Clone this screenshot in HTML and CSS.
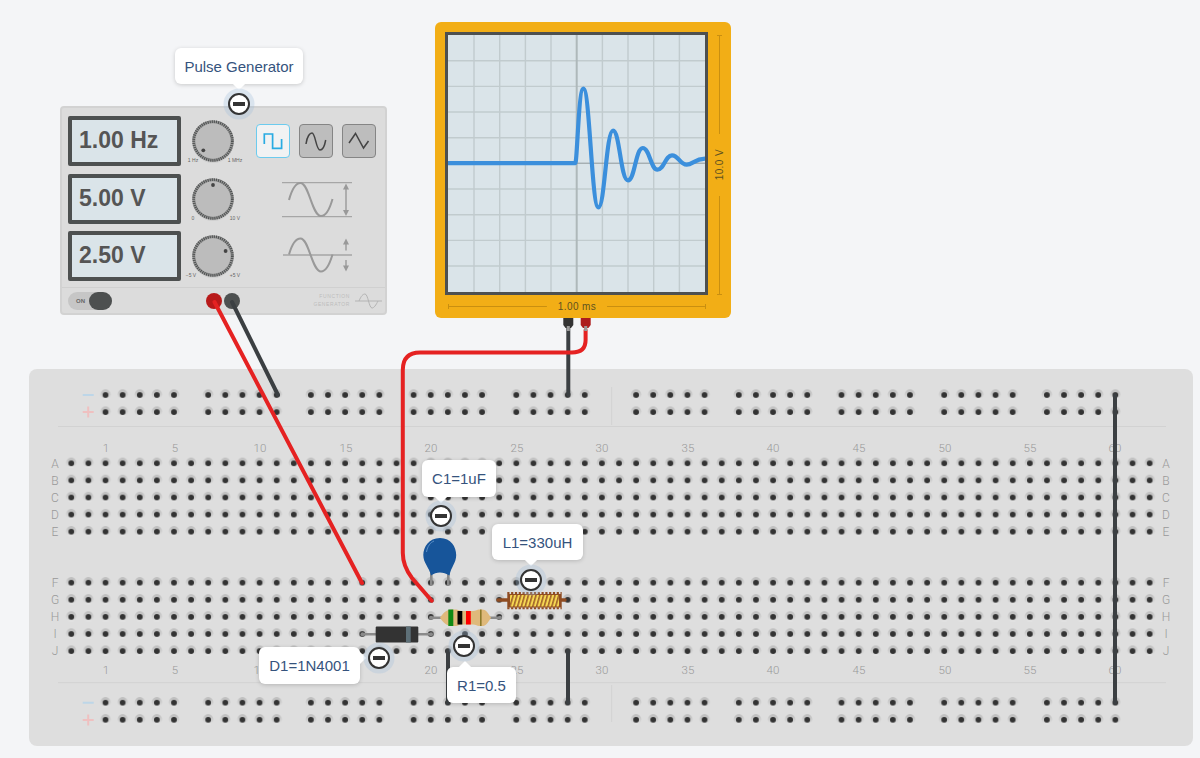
FILE: index.html
```html
<!DOCTYPE html>
<html>
<head>
  <title>Pulse Generator Circuit</title>
  <link rel="stylesheet" href="styles.css">
</head>
<body>

  <!-- shared shapes -->
  <svg class="defs" width="0" height="0">
    <defs>
      <linearGradient id="holeShade" x1="0" y1="0" x2="0" y2="1">
        <stop offset="0" stop-color="#bcbcbc"/>
        <stop offset="0.55" stop-color="#cfcfcf"/>
        <stop offset="1" stop-color="#e6e6e6"/>
      </linearGradient>
      <pattern id="hole" patternUnits="userSpaceOnUse" width="17.117" height="17.1">
        <circle cx="8.56" cy="8.1" r="5.2" fill="url(#holeShade)"/>
        <circle cx="8.56" cy="8.55" r="2.9" fill="#333"/>
      </pattern>
      <pattern id="coil" patternUnits="userSpaceOnUse" width="3.8" height="20" patternTransform="skewX(-16)">
        <rect width="3.8" height="20" fill="#8f4c22"/>
        <rect x="0.6" width="2.4" height="20" fill="#f6d752"/>
      </pattern>
      <g id="strip"><rect width="1095.5" height="85.5" fill="url(#hole)"/></g>
      <g id="rail"><rect width="85.585" height="34.2" fill="url(#hole)"/></g>
      <g id="knob">
        <circle cx="30" cy="31" r="21" fill="#cfcfcf"/>
        <circle cx="30" cy="30" r="20.8" fill="#9a9a9a"/>
        <circle cx="30" cy="30" r="19.2" fill="none" stroke="#4f5252" stroke-width="3" stroke-dasharray="1.1 1.01"/>
        <circle cx="30" cy="30" r="17.7" fill="#bcbcbc"/>
      </g>
    </defs>
  </svg>

  <div class="canvas">

    <!-- breadboard -->
    <div class="board">
      <svg class="board-art" viewBox="29 369 1164 377" width="1164" height="377">
        <path class="divider" d="M58 426.5H1166M58 682.7H1166M611.7 387V425M611.7 685V722"/>
        <path class="rail-minus" d="M82.7 395H93.7M82.7 702.7H93.7"/>
        <path class="rail-plus" d="M82.7 412H93.7M88.2 406.5V417.5M82.7 720H93.7M88.2 714.5V725.5"/>

        <use href="#rail" x="96.97" y="386.45"/><use href="#rail" x="199.64" y="386.45"/>
        <use href="#rail" x="302.34" y="386.45"/><use href="#rail" x="405.04" y="386.45"/>
        <use href="#rail" x="507.74" y="386.45"/><use href="#rail" x="627.54" y="386.45"/>
        <use href="#rail" x="730.24" y="386.45"/><use href="#rail" x="832.94" y="386.45"/>
        <use href="#rail" x="935.64" y="386.45"/><use href="#rail" x="1038.34" y="386.45"/>

        <use href="#strip" x="62.74" y="454.75"/>
        <use href="#strip" x="62.74" y="574.15"/>

        <use href="#rail" x="96.97" y="694.15"/><use href="#rail" x="199.64" y="694.15"/>
        <use href="#rail" x="302.34" y="694.15"/><use href="#rail" x="405.04" y="694.15"/>
        <use href="#rail" x="507.74" y="694.15"/><use href="#rail" x="627.54" y="694.15"/>
        <use href="#rail" x="730.24" y="694.15"/><use href="#rail" x="832.94" y="694.15"/>
        <use href="#rail" x="935.64" y="694.15"/><use href="#rail" x="1038.34" y="694.15"/>

        <g class="col-nums">
          <text x="106" y="452">1</text><text x="175" y="452">5</text><text x="260" y="452">10</text>
          <text x="346" y="452">15</text><text x="431" y="452">20</text><text x="517" y="452">25</text>
          <text x="602" y="452">30</text><text x="688" y="452">35</text><text x="773" y="452">40</text>
          <text x="859" y="452">45</text><text x="945" y="452">50</text><text x="1030" y="452">55</text>
          <text x="1115" y="452">60</text>
          <text x="106" y="674">1</text><text x="175" y="674">5</text><text x="260" y="674">10</text>
          <text x="431" y="674">20</text><text x="517" y="674">25</text>
          <text x="602" y="674">30</text><text x="688" y="674">35</text><text x="773" y="674">40</text>
          <text x="859" y="674">45</text><text x="945" y="674">50</text><text x="1030" y="674">55</text>
          <text x="1115" y="674">60</text>
        </g>
        <g class="row-names">
          <text x="55" y="468">A</text><text x="55" y="485">B</text><text x="55" y="502">C</text><text x="55" y="519">D</text><text x="55" y="536">E</text>
          <text x="55" y="587">F</text><text x="55" y="604">G</text><text x="55" y="621">H</text><text x="55" y="638">I</text><text x="55" y="655">J</text>
          <text x="1166" y="468">A</text><text x="1166" y="485">B</text><text x="1166" y="502">C</text><text x="1166" y="519">D</text><text x="1166" y="536">E</text>
          <text x="1166" y="587">F</text><text x="1166" y="604">G</text><text x="1166" y="621">H</text><text x="1166" y="638">I</text><text x="1166" y="655">J</text>
        </g>
      </svg>
    </div>

    <!-- function generator -->
    <div class="generator">
      <div class="gen-row">
        <div class="display">1.00 Hz</div>
        <svg class="knob" width="60" height="60" viewBox="0 0 60 60">
          <use href="#knob"/><circle class="knob-dot" cx="20.3" cy="39.3" r="1.9"/>
          <text class="knob-label" x="10" y="50.5">1 Hz</text><text class="knob-label" x="52" y="50.5">1 MHz</text>
        </svg>
        <div class="wave-btns">
          <div class="wave-btn wave-btn-on">
            <svg width="30" height="30" viewBox="2 2 30 30"><path class="wave-on" d="M8.3 20V10H16.6V24.4H25.6V15"/></svg>
          </div>
          <div class="wave-btn">
            <svg width="30" height="30" viewBox="2 2 30 30"><path class="wave-off" d="M7 20C8 12 11 9 13 9C16.5 9 17 26 21 26C24 26 26 20 26.7 16"/></svg>
          </div>
          <div class="wave-btn">
            <svg width="30" height="30" viewBox="2 2 30 30"><path class="wave-off" d="M7 19L13.5 9.5L21.5 24L26.5 17"/></svg>
          </div>
        </div>
      </div>
      <div class="gen-row">
        <div class="display">5.00 V</div>
        <svg class="knob" width="60" height="60" viewBox="0 0 60 60">
          <use href="#knob"/><circle class="knob-dot" cx="30" cy="16" r="1.9"/>
          <text class="knob-label" x="10" y="50.5">0</text><text class="knob-label" x="52" y="50.5">10 V</text>
        </svg>
        <svg class="wave-hint" width="72" height="44" viewBox="281 176 72 44">
          <path class="hint-line" d="M281 181.7H351M281 215.7H351"/>
          <path class="hint-curve" d="M288 199C291 188 295 182 299.5 182C308 182 311 215 320 215C325 215 329 207 331.5 198"/>
          <path class="hint-arrow" d="M345 186V212"/>
          <path class="hint-head" d="M345 182.5L348 188.5H342ZM345 215L348 209H342Z"/>
        </svg>
      </div>
      <div class="gen-row gen-row-last">
        <div class="display">2.50 V</div>
        <svg class="knob" width="60" height="60" viewBox="0 0 60 60">
          <use href="#knob"/><circle class="knob-dot" cx="42.6" cy="25" r="1.9"/>
          <text class="knob-label" x="8" y="50.5">−5 V</text><text class="knob-label" x="52" y="50.5">+5 V</text>
        </svg>
        <svg class="wave-hint" width="72" height="44" viewBox="281 236 72 44">
          <path class="hint-line" d="M282 257H351"/>
          <path class="hint-curve" d="M288 256.5C291 246 295 240.5 299.5 240.5C308 240.5 311 273.5 320 273.5C325 273.5 329 265 331.5 256.5"/>
          <path class="hint-arrow" d="M345 244V252.5M345 262V270"/>
          <path class="hint-head" d="M345 240.5L348 246.5H342ZM345 273.5L348 267.5H342Z"/>
        </svg>
      </div>
      <div class="gen-foot">
        <div class="toggle"><span class="toggle-text">ON</span><span class="toggle-thumb"></span></div>
        <div class="terminals"><span class="term term-red"></span><span class="term term-black"></span></div>
        <div class="brand">FUNCTION<br>GENERATOR</div>
        <svg class="brand-wave" width="27" height="16" viewBox="0 0 27 16">
          <path d="M0 8H27M4 8C6 3 8 1 10 1C13 1 14 15 17 15C19 15 21 12 23 8"/>
        </svg>
      </div>
    </div>

    <!-- oscilloscope -->
    <div class="scope">
      <div class="scope-top">
        <div class="scope-screen">
          <svg width="257" height="257" viewBox="448.3 35.3 257 257">
            <path class="grid-line" d="M474.3 35V293M500 35V293M525.7 35V293M551.3 35V293M602.7 35V293M628.3 35V293M654 35V293M679.7 35V293M448 61H706M448 86.7H706M448 112.3H706M448 138H706M448 189.3H706M448 215H706M448 240.7H706M448 266.3H706"/>
            <path class="grid-mid-v" d="M577 35V293"/>
            <path class="grid-mid-h" d="M448 163.5H706"/>
            <path class="trace" d="M447 163.5H575.5C577.5 163.5 578.8 89 583.7 89C590 89 592 207.7 598.7 207.7C605 207.7 606.5 131 613.3 131C620 131 621 180.7 628.3 180.7C635 180.7 636 148.3 643 148.3C650 148.3 651 170 657.7 170C664.5 170 665.5 155.7 672.3 155.7C679 155.7 680 165 687 165C693 165 695 159 706 159"/>
          </svg>
        </div>
        <div class="scope-v">
          <span class="rule-v rule-top"></span>
          <span class="scope-text scope-text-v">10.0 V</span>
          <span class="rule-v rule-bottom"></span>
        </div>
      </div>
      <div class="scope-h">
        <span class="rule-h rule-left"></span>
        <span class="scope-text">1.00 ms</span>
        <span class="rule-h rule-right"></span>
      </div>
    </div>

    <!-- parts and wires on the board -->
    <svg class="parts" width="1200" height="758" viewBox="0 0 1200 758">
      <path class="wire-black" d="M1115 395V703M568.3 328V395M448 651V703M568 651V703"/>
      <path class="wire-black" d="M232 302L278 395"/>
      <path class="wire-red" d="M214.5 302L362 583"/>
      <path class="wire-red" d="M585.6 330V340Q585.6 352.5 572 352.5H420Q402.8 352.5 402.8 370V553Q402.8 566 412 578L431.7 600.7"/>

      <path class="plug-black" d="M563.3 318H573.3V325L571 328H565.6L563.3 325Z"/>
      <path class="plug-red" d="M580.7 318H590.7V325L588.4 328H583L580.7 325Z"/>
      <path class="plug-neck" d="M568.3 326V331M585.7 326V331"/>

      <!-- capacitor -->
      <path class="lead" d="M431.3 572V585M448.3 572V585"/>
      <path class="cap-body" d="M440 538C451 538 456.2 547 456.2 555C456.2 563 451 567 449.5 575.5C443 571.5 436.5 571.5 431 575.5C429 567 423.3 563 423.3 555C423.3 547 429 538 440 538Z"/>
      <path class="cap-shine" d="M426.5 552C427.5 546 430.5 542.5 434 541"/>

      <!-- inductor -->
      <path class="ind-lead" d="M498 600H565"/>
      <path class="ind-teeth" d="M507.3 593H561.7M507.3 608.3H561.7"/>
      <rect class="ind-body" x="507.3" y="594" width="54.4" height="13.5"/>
      <rect x="510" y="595" width="49" height="11.5" fill="url(#coil)"/>

      <!-- resistor -->
      <path class="lead" d="M431 617.7H500"/>
      <circle class="lead-end" cx="431" cy="617.7" r="2"/>
      <circle class="lead-end" cx="500" cy="617.7" r="2"/>
      <path class="res-body" d="M440 617.7C443 613 447 609.5 452 609.5H456C458 609.5 459 611 462 611H473C476 611 477 609.5 479 609.5H482C486 609.5 488 613 491 617.7C488 622.5 486 626 482 626H479C477 626 476 624.5 473 624.5H462C459 624.5 458 626 456 626H452C447 626 443 622.5 440 617.7Z"/>
      <rect class="band-green" x="448.3" y="609.5" width="5" height="16.5"/>
      <rect class="band-black" x="457.5" y="611" width="4.8" height="13.5"/>
      <rect class="band-red" x="466" y="611" width="4.8" height="13.5"/>
      <rect class="band-gold" x="480" y="609.5" width="1.6" height="16.5"/>

      <!-- diode -->
      <path class="lead" d="M362.5 634.3H431"/>
      <circle class="lead-end" cx="362.5" cy="634.3" r="2"/>
      <circle class="lead-end" cx="431" cy="634.3" r="2"/>
      <rect class="diode-body" x="375.7" y="626.5" width="42.6" height="16" rx="1"/>
      <rect class="diode-band" x="406" y="626.5" width="4.7" height="16"/>
    </svg>

    <!-- labels -->
    <div class="tip tip-gen">Pulse Generator</div>
    <span class="pin pin-gen"></span>
    <div class="tip tip-cap">C1=1uF</div>
    <span class="pin pin-cap"></span>
    <div class="tip tip-ind">L1=330uH</div>
    <span class="pin pin-ind"></span>
    <div class="tip tip-dio">D1=1N4001</div>
    <span class="pin pin-dio"></span>
    <div class="tip tip-res">R1=0.5</div>
    <span class="pin pin-res"></span>

  </div>

</body>
</html>
```

FILE: styles.css
```css
body {
  margin: 0;
  background-color: #f4f5f7;
  font-family: "Liberation Sans", Arial, sans-serif;
}

.defs {
  position: absolute;
}

.canvas {
  position: relative;
  width: 1200px;
  height: 758px;
  overflow: hidden;
}

/* breadboard */
.board {
  position: absolute;
  left: 29px;
  top: 369px;
  width: 1164px;
  height: 377px;
  background-color: #dedede;
  border-radius: 8px;
}

.board-art {
  display: block;
}

.divider {
  fill: none;
  stroke: #d2d2d2;
  stroke-width: 1;
}

.rail-minus {
  fill: none;
  stroke: #bdd6e8;
  stroke-width: 2;
}

.rail-plus {
  fill: none;
  stroke: #efc0c0;
  stroke-width: 2;
}

.col-nums text,
.row-names text {
  font-family: Roboto, sans-serif;
  font-size: 11.5px;
  font-weight: 300;
  fill: #999;
  text-anchor: middle;
}

.row-names text {
  font-size: 12px;
}

/* function generator */
.generator {
  position: absolute;
  left: 60px;
  top: 106px;
  width: 327px;
  height: 209px;
  box-sizing: border-box;
  padding: 8px 6px 0 6px;
  background-color: #dcdcdc;
  border: 2px solid #d2d2d2;
  border-radius: 4px;
  display: flex;
  flex-direction: column;
  gap: 8px;
}

.gen-row {
  display: flex;
  align-items: center;
  height: 50px;
}

.gen-row-last {
  margin-top: -1px;
}

.display {
  width: 113px;
  height: 50px;
  box-sizing: border-box;
  padding-left: 7px;
  border: 4px solid #4d5050;
  border-radius: 2px;
  background-color: #dae4e9;
  color: #555;
  font-size: 23px;
  font-weight: bold;
  line-height: 40px;
}

.knob {
  margin-left: 2px;
  flex-shrink: 0;
}

.knob-dot {
  fill: #444;
}

.knob-label {
  font-size: 5px;
  fill: #666;
  text-anchor: middle;
}

.wave-btns {
  display: flex;
  gap: 9px;
  margin-left: 13px;
}

.wave-btn {
  width: 34px;
  height: 34px;
  box-sizing: border-box;
  display: flex;
  align-items: center;
  justify-content: center;
  background-color: #bdbdbd;
  border: 1.5px solid #858585;
  border-radius: 4px;
}

.wave-btn-on {
  background-color: #f1f2f3;
  border-color: #6ccbee;
}

.wave-on {
  fill: none;
  stroke: #29abe2;
  stroke-width: 1.7;
}

.wave-off {
  fill: none;
  stroke: #444;
  stroke-width: 1.5;
}

.wave-hint {
  margin-left: 39px;
}

.hint-line {
  fill: none;
  stroke: #a6a6a6;
  stroke-width: 1.3;
}

.hint-curve {
  fill: none;
  stroke: #999;
  stroke-width: 2;
}

.hint-arrow {
  fill: none;
  stroke: #999;
  stroke-width: 1.4;
}

.hint-head {
  fill: #999;
}

.gen-foot {
  position: relative;
  display: flex;
  align-items: center;
  height: 26px;
  margin: -2px -6px 0 -6px;
  padding-left: 6px;
  border-top: 1px solid #d0d0d0;
}

.toggle {
  width: 44px;
  height: 18px;
  display: flex;
  align-items: center;
  justify-content: space-between;
  background-color: #c6c6c6;
  border-radius: 9px;
}

.toggle-text {
  margin-left: 8px;
  font-size: 6px;
  font-weight: bold;
  color: #666;
}

.toggle-thumb {
  width: 23px;
  height: 18px;
  background-color: #4d5050;
  border-radius: 9px;
}

.terminals {
  display: flex;
  gap: 2px;
  margin-left: 94px;
}

.term {
  width: 16px;
  height: 16px;
  border-radius: 50%;
}

.term-red {
  background-color: #b81a1a;
}

.term-black {
  background-color: #4d5050;
}

.brand {
  margin-left: auto;
  font-size: 5px;
  line-height: 7.5px;
  letter-spacing: 0.6px;
  color: #bdbdbd;
  text-align: right;
}

.brand-wave {
  margin: 0 3px 0 5px;
}

.brand-wave path {
  fill: none;
  stroke: #b4b4b4;
  stroke-width: 1;
}

/* oscilloscope */
.scope {
  position: absolute;
  left: 435px;
  top: 22px;
  width: 296px;
  height: 296px;
  box-sizing: border-box;
  padding: 10px 0 0 10px;
  background-color: #f2ae16;
  border-radius: 6px;
}

.scope-top {
  display: flex;
}

.scope-screen {
  width: 263px;
  height: 263px;
  box-sizing: border-box;
  border: 3px solid #4d5050;
  background-color: #dae4e9;
}

.scope-screen svg {
  display: block;
}

.grid-line {
  fill: none;
  stroke: #c1cbce;
  stroke-width: 1.4;
}

.grid-mid-v {
  fill: none;
  stroke: #aeb8ba;
  stroke-width: 2;
}

.grid-mid-h {
  fill: none;
  stroke: #8f979a;
  stroke-width: 1;
}

.trace {
  fill: none;
  stroke: #3b8fdc;
  stroke-width: 4.2;
  stroke-linejoin: round;
}

.scope-v {
  width: 23px;
  height: 263px;
  display: flex;
  flex-direction: column;
  align-items: center;
  padding-top: 3px;
  box-sizing: border-box;
}

.scope-h {
  display: flex;
  align-items: center;
  width: 258px;
  margin: 3px 0 0 3px;
  height: 17px;
}

.scope-text {
  padding: 0 11px;
  font-size: 10px;
  letter-spacing: 0.4px;
  color: #5f5220;
  white-space: nowrap;
}

.scope-text-v {
  padding: 15px 0;
  writing-mode: vertical-rl;
  transform: rotate(180deg);
}

.rule-h {
  flex: 1;
  height: 5px;
  background: linear-gradient(#c98f10, #c98f10) center / 100% 1px no-repeat;
}

.rule-left {
  border-left: 1px solid #c98f10;
}

.rule-right {
  border-right: 1px solid #c98f10;
}

.rule-v {
  flex: 1;
  width: 5px;
  background: linear-gradient(#c98f10, #c98f10) center / 1px 100% no-repeat;
}

.rule-top {
  border-top: 1px solid #c98f10;
}

.rule-bottom {
  border-bottom: 1px solid #c98f10;
}

/* wires and parts */
.parts {
  position: absolute;
  left: 0;
  top: 0;
}

.wire-black {
  fill: none;
  stroke: #3b3f42;
  stroke-width: 4;
  stroke-linecap: round;
}

.wire-red {
  fill: none;
  stroke: #e52222;
  stroke-width: 4;
  stroke-linecap: round;
}

.plug-black {
  fill: #333;
}

.plug-red {
  fill: #ad1c1c;
}

.plug-neck {
  fill: none;
  stroke: #9a9a9a;
  stroke-width: 3;
}

.lead {
  fill: none;
  stroke: #8a8a8a;
  stroke-width: 2.6;
}

.lead-end {
  fill: #8a8a8a;
}

.cap-body {
  fill: #17559a;
}

.cap-shine {
  fill: none;
  stroke: #5a8fc8;
  stroke-width: 1;
}

.ind-lead {
  fill: none;
  stroke: #8f4c22;
  stroke-width: 3.4;
  stroke-linecap: round;
}

.ind-teeth {
  fill: none;
  stroke: #8f4c22;
  stroke-width: 2;
  stroke-dasharray: 2.2 1.6;
}

.ind-body {
  fill: #8f4c22;
}

.res-body {
  fill: #dfb97b;
}

.band-green {
  fill: #0f8a14;
}

.band-black {
  fill: #000;
}

.band-red {
  fill: #f00;
}

.band-gold {
  fill: #8c7a2a;
}

.diode-body {
  fill: #333;
}

.diode-band {
  fill: #5e7078;
}

/* labels */
.tip {
  position: absolute;
  display: flex;
  align-items: center;
  justify-content: center;
  box-sizing: border-box;
  background-color: #fff;
  border-radius: 6px;
  box-shadow: 0 1px 4px rgba(0, 0, 0, 0.18);
  color: #35537d;
  font-size: 15px;
  white-space: nowrap;
}

.tip::after {
  content: "";
  position: absolute;
  width: 10px;
  height: 10px;
  background-color: #fff;
  transform: rotate(45deg);
}

.tip-gen {
  left: 175px;
  top: 48px;
  width: 128px;
  height: 36px;
}

.tip-gen::after {
  left: 59px;
  bottom: -4px;
}

.tip-cap {
  left: 422px;
  top: 460px;
  width: 74px;
  height: 37px;
}

.tip-cap::after {
  left: 14px;
  bottom: -4px;
}

.tip-ind {
  left: 492px;
  top: 524px;
  width: 91px;
  height: 36px;
}

.tip-ind::after {
  left: 34px;
  bottom: -4px;
}

.tip-dio {
  left: 259px;
  top: 647px;
  width: 101px;
  height: 37px;
}

.tip-dio::after {
  right: -4px;
  top: 6px;
}

.tip-res {
  left: 447px;
  top: 667px;
  width: 69px;
  height: 36px;
}

.tip-res::after {
  left: 13px;
  top: -4px;
}

.pin {
  position: absolute;
  width: 22px;
  height: 22px;
  box-sizing: border-box;
  display: flex;
  align-items: center;
  justify-content: center;
  background-color: #fff;
  border: 2.5px solid #333;
  border-radius: 50%;
  box-shadow: 0 0 0 4.5px rgba(160, 190, 220, 0.3);
}

.pin::before {
  content: "";
  width: 12px;
  height: 4px;
  background-color: #333;
}

.pin-gen {
  left: 228px;
  top: 93px;
}

.pin-cap {
  left: 430px;
  top: 505px;
}

.pin-ind {
  left: 520px;
  top: 569px;
}

.pin-dio {
  left: 368px;
  top: 647px;
}

.pin-res {
  left: 453px;
  top: 635px;
}
```
